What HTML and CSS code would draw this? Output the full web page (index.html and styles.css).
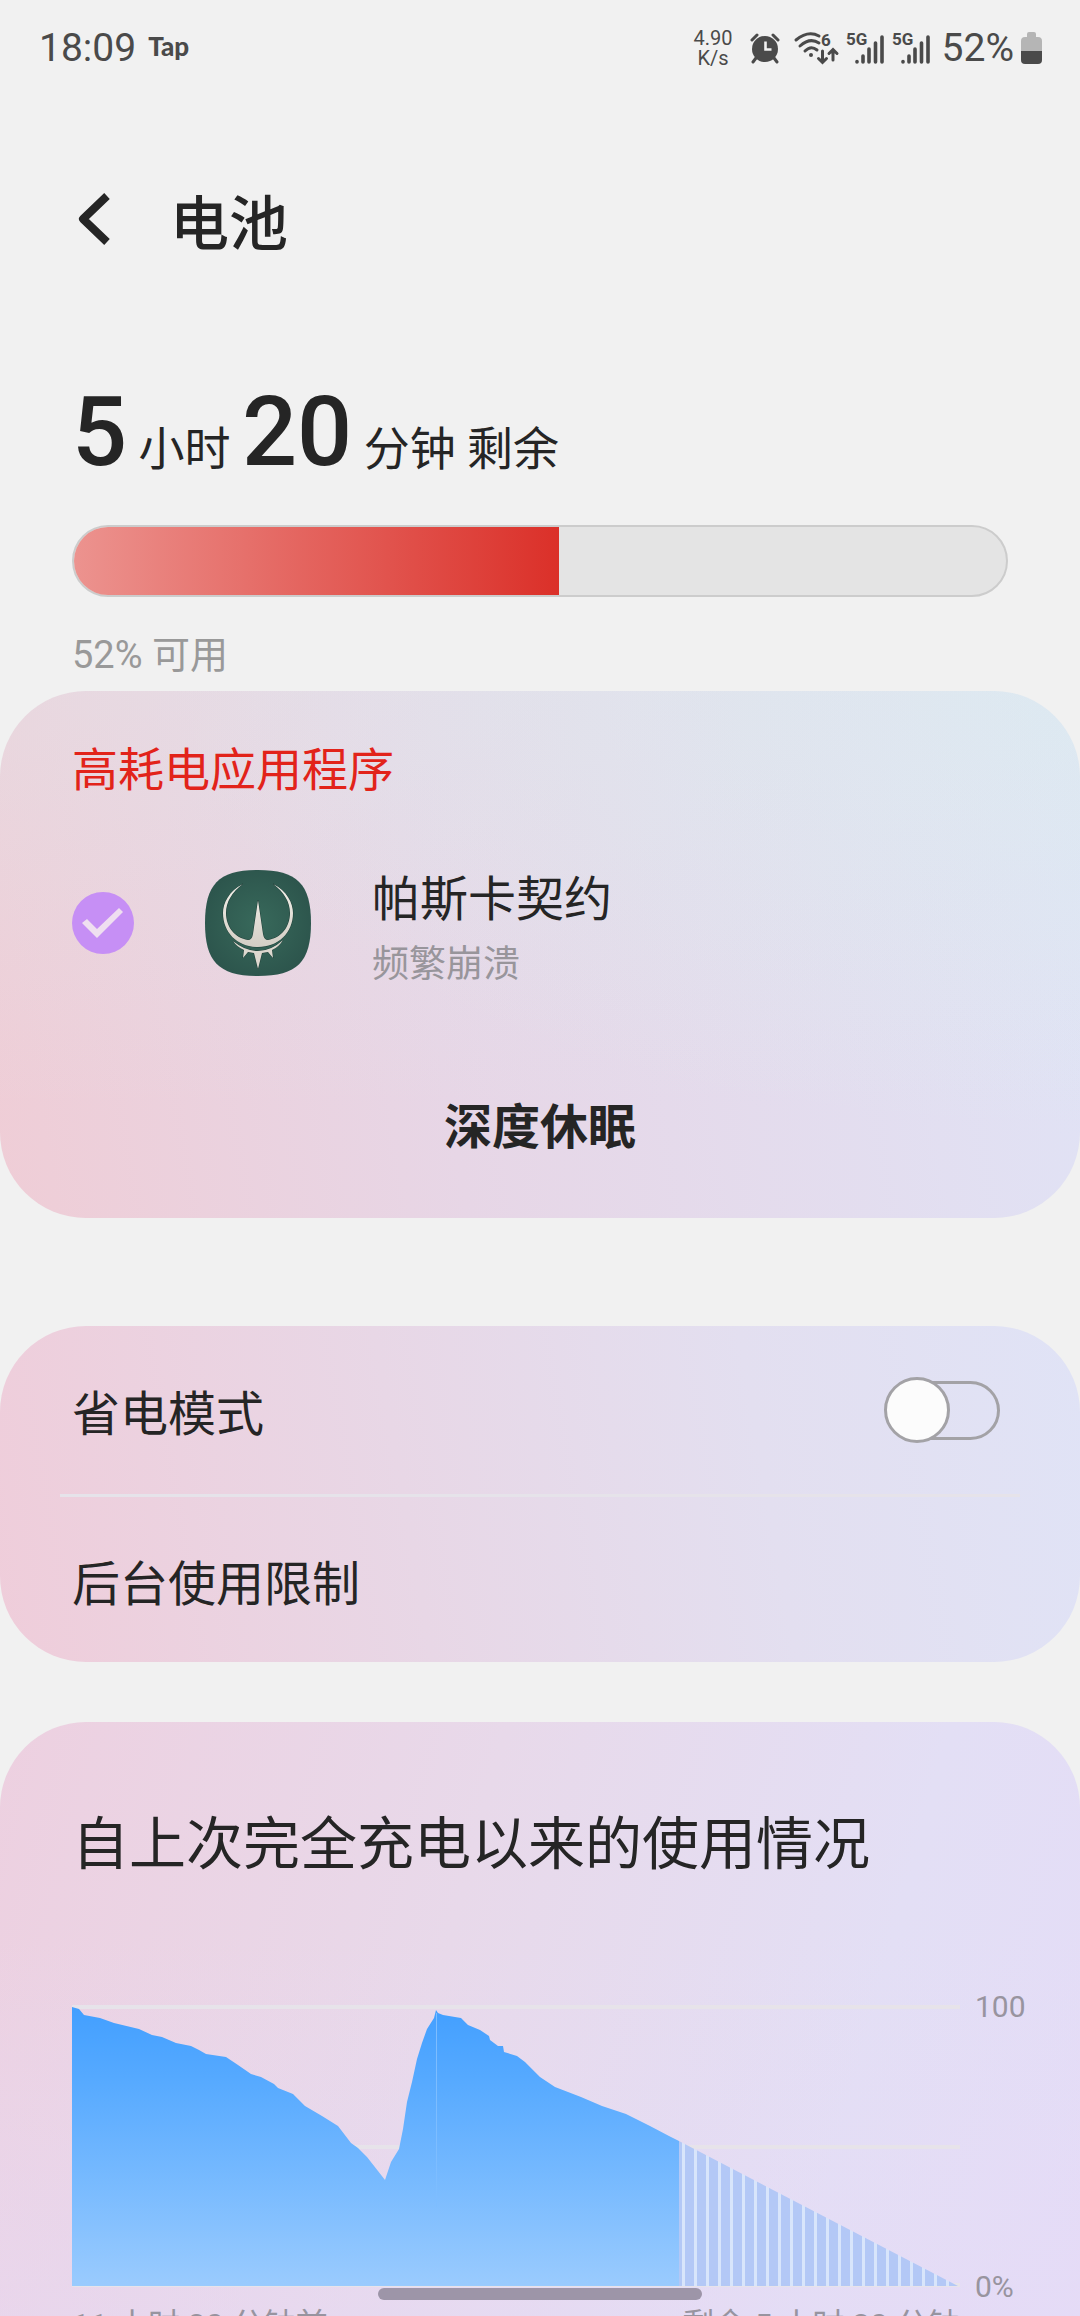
FILE: index.html
```html
<!DOCTYPE html>
<html lang="zh-CN">
<head>
  <meta charset="UTF-8" />
  <meta name="viewport" content="width=device-width, initial-scale=1" />
  <title>电池</title>
  <link rel="stylesheet" href="styles.css">
</head>
<body>

  <div class="status-bar">
    <div class="status-left">
      <span class="clock">18:09</span>
      <span class="tap">Tap</span>
    </div>
    <div class="status-right">
      <div class="speed"><span>4.90</span><span>K/s</span></div>
      <svg class="icon-alarm" width="30" height="32" viewBox="0 0 30 32" aria-hidden="true">
        <circle cx="15" cy="17" r="13" fill="#4a4a4a"/>
        <path d="M2 8l5-5M28 8l-5-5M6 26l-3 4M24 26l3 4" stroke="#4a4a4a" stroke-width="3" stroke-linecap="round"/>
        <path d="M15.500 9.500v8h6" fill="none" stroke="#f1f1f1" stroke-width="2.600"/>
      </svg>
      <svg class="icon-wifi" width="44" height="34" viewBox="0 0 44 34" aria-hidden="true">
        <g fill="none" stroke="#4a4a4a" stroke-width="3" stroke-linecap="round">
          <path d="M2 9Q14-1 25 5M6 15Q16 6 25 12M11 20Q17 14 23 19"/>
          <path d="M28.500 20v11M24.500 27.500l4 4 4-4M39 29V19M35 22.500l4-4 4 4"/>
        </g>
        <circle cx="17" cy="24" r="2" fill="#4a4a4a"/>
        <text x="27" y="15" class="icon-text">6</text>
      </svg>
      <svg class="icon-signal" width="38" height="34" viewBox="0 0 38 34" aria-hidden="true">
        <text x="0" y="14" class="icon-text">5G</text>
        <path d="M11 30.500v.5M17 25v6M23 18v13M29.500 12v19M36 6v25" stroke="#4a4a4a" stroke-width="3.600" stroke-linecap="round"/>
      </svg>
      <svg class="icon-signal" width="38" height="34" viewBox="0 0 38 34" aria-hidden="true">
        <text x="0" y="14" class="icon-text">5G</text>
        <path d="M11 30.500v.5M17 25v6M23 18v13M29.500 12v19M36 6v25" stroke="#4a4a4a" stroke-width="3.600" stroke-linecap="round"/>
      </svg>
      <span class="percent">52%</span>
      <svg class="icon-battery" width="21" height="32" viewBox="0 0 21 32" aria-hidden="true">
        <path d="M6 5V2q0-2 2-2h5q2 0 2 2v3h2q4 0 4 4v10H0V9q0-4 4-4z" fill="#b5b5b5"/>
        <path d="M0 19h21v9q0 4-4 4H4q-4 0-4-4z" fill="#4a4a4a"/>
      </svg>
    </div>
  </div>

  <main class="page">
    <header class="header">
      <button class="back" type="button" aria-label="返回">
        <svg width="34" height="54" viewBox="0 0 34 54">
          <path d="M30 4L6 27l24 23" fill="none" stroke="#252525" stroke-width="8" stroke-linejoin="round"/>
        </svg>
      </button>
      <h1>电池</h1>
    </header>

    <section class="remaining">
      <p class="time"><b>5</b> 小时 <b>20</b> 分钟 剩余</p>
      <div class="level" role="meter" aria-label="电池电量" aria-valuemin="0" aria-valuemax="100" aria-valuenow="52">
        <div class="level-fill" style="width: 52%"></div>
      </div>
      <p class="available">52% 可用</p>
    </section>

    <section class="card card-apps">
      <h2 class="warning">高耗电应用程序</h2>
      <label class="app">
        <input class="check" type="checkbox" checked>
        <svg class="app-icon" width="106" height="106" viewBox="0 0 106 106" aria-hidden="true">
          <defs>
            <radialGradient id="appBg" r="0.7">
              <stop offset="0" stop-color="#38695b"/>
              <stop offset="1" stop-color="#294f48"/>
            </radialGradient>
            <linearGradient id="horn" x1="0" y1="0" x2="0" y2="1">
              <stop offset="0" stop-color="#f3f1ea"/>
              <stop offset="1" stop-color="#d3cec5"/>
            </linearGradient>
          </defs>
          <path d="M53 0C92 0 106 14 106 53S92 106 53 106 0 92 0 53 14 0 53 0z" fill="url(#appBg)"/>
          <g stroke="#1d3d36" stroke-width="1" paint-order="stroke">
            <path d="M38 14C24 21 18 33 18 43C18 63 33 77 53 77S88 63 88 43C88 33 82 21 68 14C79 22 85 32 85 43C85 57 76 68 63 70Q59 70 58 64L53 30L48 64Q47 70 43 70C30 68 21 57 21 43C21 32 27 22 38 14z" fill="url(#horn)"/>
            <path d="M28 71Q40 81 53 81T78 70Q74 77 67 80L68 88L63 82L57 83L53 99L49 83L43 82L38 88L39 80Q32 77 28 71z" fill="#ddd8cf"/>
          </g>
        </svg>
        <span class="app-text">
          <span class="app-name">帕斯卡契约</span>
          <span class="app-state">频繁崩溃</span>
        </span>
      </label>
      <button class="sleep" type="button">深度休眠</button>
    </section>

    <section class="card card-options">
      <label class="option">
        <span>省电模式</span>
        <input class="switch" type="checkbox" role="switch">
      </label>
      <a class="option" href="#limits">后台使用限制</a>
    </section>

    <section class="card card-usage">
      <h2>自上次完全充电以来的使用情况</h2>
      <div class="chart">
        <svg class="plot" viewBox="0 0 888 280" preserveAspectRatio="none" role="img" aria-label="电量曲线">
          <defs>
            <linearGradient id="used" gradientUnits="userSpaceOnUse" x1="0" y1="0" x2="0" y2="279">
              <stop offset="0" stop-color="#429fff"/>
              <stop offset="0.25" stop-color="#55a9ff"/>
              <stop offset="1" stop-color="#9acbfe"/>
            </linearGradient>
            <pattern id="stripes" patternUnits="userSpaceOnUse" x="610" width="12" height="280">
              <rect width="12" height="280" fill="#b3c8f6"/>
              <rect width="3" height="280" fill="#d8e5fb"/>
            </pattern>
          </defs>
          <path d="M0 0H888M0 140H888M0 278H888" stroke="#e7e3ea" stroke-width="4"/>
          <path d="M607 134L886 279H607z" fill="url(#stripes)"/>
          <path d="M0 0L7 2L12 8L28 11L42 16L67 22L80 28L90 30L104 36L119 39L127 43L134 47L154 50L166 58L179 67L189 70L202 77L206 81L221 87L233 99L250 109L266 119L279 136L286 141L295 150L306 164L313 173L319 155L327 142L331 122L335 95L340 75L345 52L350 36L355 22L362 11L364 3L366 6L371 8L389 11L396 18L408 23L417 29L418 33L426 39L431 39L432 45L445 49L453 55L468 70L483 80L509 90L530 99L554 107L578 119L597 129L607 134V279H0z" fill="url(#used)"/>
          <path d="M364.500 6V200" stroke="#7dbdff" stroke-width="1"/>
        </svg>
        <div class="scale"><span>100</span><span>0%</span></div>
      </div>
      <div class="range"><span>11 小时 30 分钟前</span><span>剩余 5 小时 20 分钟</span></div>
    </section>
  </main>

  <div class="gesture"></div>

</body>
</html>
```

FILE: styles.css
```css
*, *::before, *::after {
  box-sizing: border-box;
}
body {
  margin: 0;
  height: 100vh;
  display: flex;
  flex-direction: column;
  overflow: hidden;
  background: #f1f1f1;
  color: #252525;
  font-family: Roboto, "Noto Sans CJK SC", sans-serif;
  font-size: 48px;
}
h1, h2, p {
  margin: 0;
  font-weight: 400;
}
button {
  padding: 0;
  border: 0;
  background: none;
  color: inherit;
  font: inherit;
}
input {
  appearance: none;
  margin: 0;
  flex: none;
}

/* status bar */
.status-bar {
  flex: none;
  display: flex;
  justify-content: space-between;
  height: 96px;
  padding: 0 38px 0 39px;
  color: #4a4a4a;
  font-size: 39px;
}
.status-left, .status-right {
  display: flex;
  align-items: center;
}
.status-left {
  gap: 12px;
}
.tap {
  font-family: Lato, sans-serif;
  font-size: 26px;
  font-weight: 900;
  line-height: 36px;
  padding-bottom: 4px;
}
.speed {
  display: flex;
  flex-direction: column;
  align-items: center;
  font-size: 20px;
  line-height: 20px;
}
.status-right svg {
  overflow: visible;
}
.icon-alarm {
  margin: 0 14px 0 17px;
}
.icon-signal {
  margin-left: 8px;
}
.icon-text {
  font: 700 17px Roboto, sans-serif;
  fill: #4a4a4a;
}
.percent {
  margin: 0 7px 0 12px;
}

.page {
  flex: 1;
  min-height: 0;
  overflow-y: auto;
  scrollbar-width: none;
}

/* title */
.header {
  display: flex;
  align-items: center;
  gap: 59px;
  height: 252px;
  padding: 0 77px 6px;
}
.header h1 {
  font-size: 59px;
  font-weight: 500;
}
.back {
  display: flex;
}

/* remaining time */
.remaining {
  padding: 28px 72px 6px;
}
.time {
  font-size: 46px;
  line-height: 112px;
}
.time b {
  font-size: 97px;
  font-weight: 500;
}
.level {
  height: 72px;
  margin: 20px 0 28px;
  border: 2px solid #cccccc;
  border-radius: 36px;
  background: #e4e4e4;
  overflow: hidden;
}
.level-fill {
  height: 100%;
  background: linear-gradient(90deg, #ec938f, #db3029);
}
.available {
  color: #999999;
  font-size: 38px;
  line-height: 60px;
}

.card {
  border-radius: 86px;
}

/* power hungry apps */
.card-apps {
  display: flex;
  flex-direction: column;
  padding: 47px 72px;
  background:
    linear-gradient(180deg, rgba(222, 236, 236, 0.3), rgba(222, 236, 236, 0) 80%),
    radial-gradient(at 100% 0, rgba(217, 240, 240, 0.4), rgba(217, 240, 240, 0) 60%),
    linear-gradient(80deg, #efcdd6, #e7d6e6 40%, #e0e3f6);
}
.warning {
  color: #e2231a;
  font-size: 46px;
  line-height: 64px;
}
.app {
  display: flex;
  align-items: center;
  margin-top: 54px;
}
.check {
  width: 62px;
  height: 62px;
  border-radius: 50%;
  background: #c68ff5;
}
.check:checked::before {
  content: "";
  display: block;
  height: 100%;
  background: #efdff0;
  clip-path: polygon(10px 31px, 15px 27px, 25px 37px, 47px 16px, 51px 20px, 25px 46px);
}
.app-icon {
  flex: none;
  margin: 0 61px 0 71px;
}
.app-text {
  display: flex;
  flex-direction: column;
  padding-top: 4px;
}
.app-name {
  line-height: 80px;
}
.app-state {
  color: #98959b;
  font-size: 37px;
  line-height: 50px;
}
.sleep {
  align-self: center;
  height: 96px;
  margin-top: 85px;
  font-weight: 700;
}

/* options */
.card-options {
  margin-top: 108px;
  padding: 0 60px;
  background: linear-gradient(80deg, #efcdda, #e8d7e6 38%, #e3dff0 70%, #e0e3f6);
}
.option {
  display: flex;
  align-items: center;
  justify-content: space-between;
  height: 168px;
  padding: 0 20px 0 12px;
  color: inherit;
  text-decoration: none;
}
.option + .option {
  border-top: 3px solid #e6e3ea;
}
.switch {
  display: grid;
  align-items: center;
  width: 116px;
  height: 66px;
}
.switch::before, .switch::after {
  content: "";
  grid-area: 1 / 1;
  border: 3px solid #a3a2a6;
  border-radius: 33px;
}
.switch::before {
  justify-self: end;
  width: 111px;
  height: 59px;
}
.switch::after {
  width: 66px;
  height: 66px;
  background: #fcfcfc;
}
.switch:checked::after {
  justify-self: end;
}

/* usage chart */
.card-usage {
  margin-top: 60px;
  padding: 83px 48px 80px 72px;
  border-radius: 86px 86px 0 0;
  background:
    linear-gradient(180deg, rgba(230, 218, 246, 0) 30%, rgba(230, 218, 246, 0.6)),
    linear-gradient(105deg, #edd0e0, #e8d9ea 40%, #e3dff5 75%, #e4dcf7);
}
.card-usage h2 {
  font-size: 57px;
  line-height: 80px;
}
.chart {
  display: flex;
  gap: 15px;
  height: 280px;
  margin-top: 122px;
}
.plot {
  flex: 1;
  min-width: 0;
  height: 280px;
  overflow: visible;
}
.scale {
  display: flex;
  flex-direction: column;
  justify-content: space-between;
  width: 57px;
  margin: -20px 0;
  color: #98949f;
  font-size: 30px;
  line-height: 40px;
}
.range {
  display: flex;
  justify-content: space-between;
  margin: 14px 72px 0 0;
  color: #98949f;
  font-size: 32px;
  line-height: 48px;
}

/* gesture hint lies over the page */
.gesture {
  position: fixed;
  bottom: 16px;
  left: 35%;
  right: 35%;
  height: 12px;
  border-radius: 6px;
  background: #9d95a8;
}
```
